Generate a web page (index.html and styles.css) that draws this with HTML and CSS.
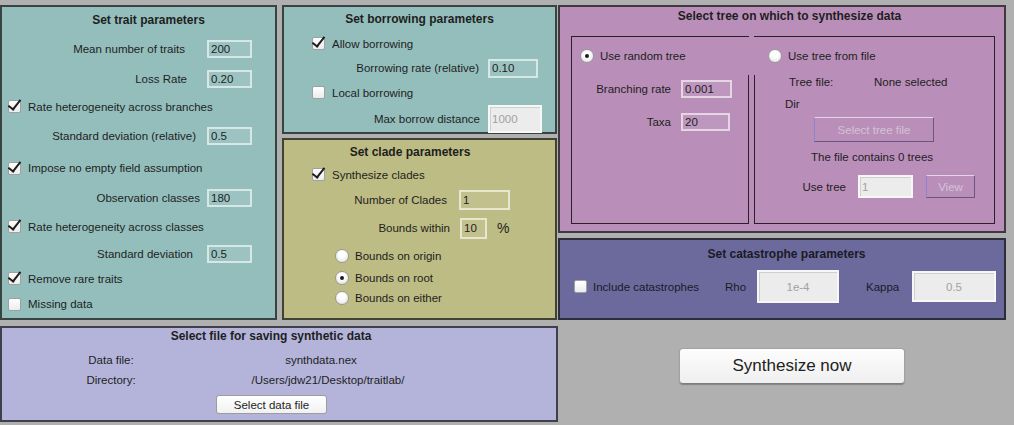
FILE: index.html
```html
<!DOCTYPE html>
<html>
<head>
	<title>TraitLab - Synthesize data</title>
	<link rel="stylesheet" href="styles.css">
</head>
<body>
<div class="app">
	<div class="left-col">
		<div class="top-row">

			<!-- trait parameters -->
			<div class="panel trait">
				<div class="title trait-title">Set trait parameters</div>
				<div class="field"><span class="lbl pr22">Mean number of traits</span><input class="edit w45" type="text" value="200"></div>
				<div class="field"><span class="lbl pr20">Loss Rate</span><input class="edit w45" type="text" value="0.20"></div>
				<div class="check"><span class="box on"></span>Rate heterogeneity across branches</div>
				<div class="field"><span class="lbl pr11">Standard deviation (relative)</span><input class="edit w45" type="text" value="0.5"></div>
				<div class="check"><span class="box on"></span>Impose no empty field assumption</div>
				<div class="field"><span class="lbl pr7">Observation classes</span><input class="edit w45" type="text" value="180"></div>
				<div class="check"><span class="box on"></span>Rate heterogeneity across classes</div>
				<div class="field"><span class="lbl pr14">Standard deviation</span><input class="edit w45" type="text" value="0.5"></div>
				<div class="check"><span class="box on"></span>Remove rare traits</div>
				<div class="check"><span class="box"></span>Missing data</div>
			</div>

			<div class="mid-col">
				<!-- borrowing -->
				<div class="panel borrow">
					<div class="title">Set borrowing parameters</div>
					<div class="check"><span class="box on"></span>Allow borrowing</div>
					<div class="field"><span class="lbl pr9">Borrowing rate (relative)</span><input class="edit w50" type="text" value="0.10"></div>
					<div class="check"><span class="box"></span>Local borrowing</div>
					<div class="field"><span class="lbl pr8">Max borrow distance</span><input class="edit off w54 tall" type="text" value="1000" disabled></div>
				</div>

				<!-- clades -->
				<div class="panel clade">
					<div class="title clade-title">Set clade parameters</div>
					<div class="check"><span class="box on"></span>Synthesize clades</div>
					<div class="field"><span class="lbl pr12 w175">Number of Clades</span><input class="edit w51 h20" type="text" value="1"></div>
					<div class="field"><span class="lbl pr10 w176">Bounds within</span><input class="edit w27 h21" type="text" value="10"><span class="pct">%</span></div>
					<div class="opt"><span class="radio"></span>Bounds on origin</div>
					<div class="opt"><span class="radio on"></span>Bounds on root</div>
					<div class="opt"><span class="radio"></span>Bounds on either</div>
				</div>
			</div>
		</div>

		<!-- output file -->
		<div class="panel save">
			<div class="save-title">Select file for saving synthetic data</div>
			<div class="file-grid">
				<span>Data file:</span><span>synthdata.nex</span>
				<span>Directory:</span><span class="dir-path">/Users/jdw21/Desktop/traitlab/</span>
			</div>
			<button class="btn small-btn">Select data file</button>
		</div>
	</div>

	<div class="right-col">
		<!-- tree -->
		<div class="panel tree">
			<div class="title tree-title">Select tree on which to synthesize data</div>
			<div class="tree-boxes">
				<div class="tbox tbox-left">
					<div class="tbox-head"><span class="radio on"></span>Use random tree</div>
					<div class="tbox-body">
						<div class="field"><span class="lbl">Branching rate</span><input class="edit w51" type="text" value="0.001"></div>
						<div class="field"><span class="lbl">Taxa</span><input class="edit w49" type="text" value="20"></div>
					</div>
				</div>
				<div class="tbox tbox-right">
					<div class="tbox-head"><span class="radio"></span>Use tree from file</div>
					<div class="tbox-body">
						<div class="tf-row"><span class="tf-key">Tree file:</span>None selected</div>
						<div class="dir-row">Dir</div>
						<button class="btn dis-btn tree-btn" disabled>Select tree file</button>
						<div class="count-row">The file contains 0 trees</div>
						<div class="use-row">
							<span class="use-lbl">Use tree</span>
							<input class="edit off w55 h23" type="text" value="1" disabled>
							<button class="btn dis-btn view-btn" disabled>View</button>
						</div>
					</div>
				</div>
			</div>
		</div>

		<!-- catastrophes -->
		<div class="panel cat">
			<div class="cat-title">Set catastrophe parameters</div>
			<div class="cat-row">
				<span class="box"></span>
				<span>Include catastrophes</span>
				<span>Rho</span>
				<input class="edit off center w82 h33" type="text" value="1e-4" disabled>
				<span></span>
				<span>Kappa</span>
				<input class="edit off center w84 h31" type="text" value="0.5" disabled>
			</div>
		</div>

		<div class="go-wrap">
			<button class="btn go-btn">Synthesize now</button>
		</div>
	</div>
</div>
</body>
</html>
```

FILE: styles.css
```css
/* page */
body {
  margin: 0;
  background-color: #b0b0b0;
  font-family: "Liberation Sans", Arial, sans-serif;
  font-size: 11.5px;
  color: #1e1e1e;
  height: 425px;
  overflow: hidden;
}

.app {
  display: flex;
  padding-top: 5px;
}

.left-col {
  width: 558px;
}

.top-row {
  display: flex;
  height: 315px;
}

.mid-col {
  width: 275px;
  margin-left: 5px;
  display: flex;
  flex-direction: column;
}

.right-col {
  width: 448px;
}

/* panels */
.panel {
  box-sizing: border-box;
  border: 2px solid rgba(25, 25, 25, 0.75);
}

.title {
  font-weight: bold;
  font-size: 12px;
  text-align: center;
  white-space: nowrap;
}

.trait {
  width: 277px;
  background-color: #94bebc;
  display: grid;
  grid-template-rows: 26px 31px 30px 25px 33px 32px 28px 29px 25px 25px 26px;
  align-items: center;
}

.trait-title {
  padding-left: 20px;
}

.trait .lbl {
  width: 205px;
}

.trait .check {
  padding-left: 6px;
}

.borrow {
  height: 129px;
  background-color: #94bebc;
  display: grid;
  grid-template-rows: 24px 25px 24px 25px 27px;
  align-items: center;
}

.borrow .lbl {
  width: 204px;
}

.borrow .check,
.clade .check {
  padding-left: 28px;
}

.clade {
  height: 182px;
  margin-top: 4px;
  background-color: #bdbc84;
  display: grid;
  grid-template-rows: 23px 23px 27px 30px 25px 20px 20px;
  align-items: center;
}

.clade-title {
  padding-right: 19px;
}

.pct {
  margin-left: 10px;
  font-size: 14px;
}

.opt {
  display: flex;
  align-items: center;
  padding-left: 51px;
}

.opt .radio {
  margin-right: 6px;
}

/* rows */
.field {
  display: flex;
  align-items: center;
}

.lbl {
  flex: none;
  box-sizing: border-box;
  text-align: right;
  white-space: nowrap;
}

.pr7 { padding-right: 7px; }
.pr8 { padding-right: 8px; }
.pr9 { padding-right: 9px; }
.pr10 { padding-right: 10px; }
.pr11 { padding-right: 11px; }
.pr12 { padding-right: 12px; }
.pr14 { padding-right: 14px; }
.pr20 { padding-right: 20px; }
.pr22 { padding-right: 22px; }
.lbl.w175 { width: 175px; }
.lbl.w176 { width: 176px; }

.check {
  display: flex;
  align-items: center;
  white-space: nowrap;
}

.check .box {
  margin-right: 7px;
}

/* controls */
.edit {
  box-sizing: border-box;
  height: 18px;
  margin: 0;
  padding: 0 2px;
  border: 2px solid rgba(255, 255, 255, 0.6);
  background-color: rgba(255, 255, 255, 0.08);
  font-family: inherit;
  font-size: 11.5px;
  color: #1e1e1e;
  outline: none;
}

.edit.off {
  background-color: #ececec;
  border: 2px solid #f7f7f7;
  box-shadow: inset 1px 1px 0 #cfcfcf;
  color: #a2a2a2;
}

.edit.center {
  text-align: center;
}

.w27 { width: 27px; }
.w45 { width: 45px; }
.w49 { width: 49px; }
.w50 { width: 50px; height: 19px; }
.w51 { width: 51px; }
.w54 { width: 54px; }
.w55 { width: 55px; }
.w82 { width: 82px; }
.w84 { width: 84px; }
.h20 { height: 20px; }
.h21 { height: 21px; }
.h23 { height: 23px; }
.h31 { height: 31px; }
.h33 { height: 33px; }
.tall { height: 28px; }

.box {
  position: relative;
  flex: none;
  box-sizing: border-box;
  width: 13px;
  height: 13px;
  border: 1px solid #a0a0a0;
  border-radius: 2px;
  background: linear-gradient(#ffffff, #ececec);
}

.box.on::after {
  content: "";
  position: absolute;
  left: 2px;
  top: -4px;
  width: 5px;
  height: 11px;
  border-right: 2.5px solid #1c1c1c;
  border-bottom: 2.5px solid #1c1c1c;
  transform: rotate(38deg);
}

.radio {
  position: relative;
  flex: none;
  box-sizing: border-box;
  width: 14px;
  height: 14px;
  border: 1px solid #9a9a9a;
  border-radius: 50%;
  background: radial-gradient(circle at 50% 35%, #ffffff 30%, #dcdcdc 100%);
}

.radio.on::after {
  content: "";
  position: absolute;
  left: 4px;
  top: 4px;
  width: 4px;
  height: 4px;
  border-radius: 50%;
  background-color: #1c1c1c;
}

.btn {
  box-sizing: border-box;
  margin: 0;
  padding: 0;
  font-family: inherit;
  color: #1e1e1e;
  cursor: pointer;
}

/* tree panel */
.tree {
  height: 228px;
  background-color: #b98fb9;
}

.tree-title {
  height: 18px;
  line-height: 18px;
  padding-left: 15px;
}

.tree-boxes {
  display: flex;
  gap: 5px;
  height: 188px;
  margin: 11px 0 0 11px;
}

.tbox {
  box-sizing: border-box;
  display: flex;
  flex-direction: column;
  border: 1px solid #2a1f2c;
}

.tbox-head {
  display: flex;
  align-items: center;
  height: 38px;
  flex: none;
  white-space: nowrap;
}

.tbox-head .radio {
  margin-right: 6px;
}

.tbox-body {
  flex: 1;
}

.tbox-left {
  width: 178px;
  border-right: none;
}

.tbox-left .tbox-head {
  padding-left: 8px;
}

.tbox-left .tbox-body {
  border-right: 1px solid #2a1f2c;
  padding-top: 5px;
  display: flex;
  flex-direction: column;
  gap: 15px;
}

.tbox-left .lbl {
  width: 109px;
  padding-right: 10px;
}

.tbox-right {
  width: 241px;
  border-left: none;
}

.tbox-right .tbox-head {
  padding-left: 14px;
}

.tbox-right .tbox-body {
  border-left: 1px solid #2a1f2c;
}

.tf-row {
  height: 14px;
  line-height: 14px;
  padding-left: 34px;
  white-space: nowrap;
}

.tf-key {
  display: inline-block;
  width: 85px;
}

.dir-row {
  height: 14px;
  line-height: 14px;
  margin-top: 8px;
  padding-left: 30px;
}

.dis-btn {
  background-color: #b98fb9;
  border: 1px solid #6a5680;
  border-top-color: #e4d4ea;
  border-left-color: #8c86d0;
  color: #d3c2d6;
  font-size: 11.5px;
}

.tree-btn {
  display: block;
  width: 120px;
  height: 25px;
  margin: 6px 0 0 59px;
}

.count-row {
  height: 14px;
  line-height: 14px;
  margin-top: 8px;
  padding-left: 56px;
  white-space: nowrap;
}

.use-row {
  display: flex;
  align-items: center;
  height: 23px;
  margin-top: 11px;
}

.use-lbl {
  width: 91px;
  text-align: right;
  margin-right: 12px;
}

.view-btn {
  width: 49px;
  height: 23px;
  margin-left: 13px;
}

/* catastrophe panel */
.cat {
  height: 82px;
  margin-top: 5px;
  background-color: #6c6a9c;
  color: #1a1a26;
}

.cat-title {
  height: 28px;
  line-height: 28px;
  text-align: center;
  font-weight: bold;
  font-size: 12px;
  padding-left: 9px;
}

.cat-row {
  display: grid;
  grid-template-columns: 19px 132px 32px 82px 27px 46px 84px;
  align-items: center;
  height: 37px;
  padding-left: 14px;
  white-space: nowrap;
}

/* save panel */
.save {
  height: 96px;
  margin-top: 6px;
  background-color: #b4b4db;
}

.save-title {
  height: 16px;
  line-height: 16px;
  text-align: center;
  font-weight: bold;
  font-size: 12px;
  padding-right: 16px;
}

.file-grid {
  display: grid;
  grid-template-columns: 80px 340px;
  grid-template-rows: 20px 20px;
  align-items: center;
  margin-top: 6px;
  padding-left: 69px;
  text-align: center;
  white-space: nowrap;
}

.dir-path {
  padding-left: 14px;
}

.small-btn {
  display: block;
  width: 111px;
  height: 19px;
  margin: 5px 0 0 214px;
  background: linear-gradient(#ffffff, #f1f1f1);
  border: 1px solid #9c9c9c;
  border-radius: 3px;
  font-size: 11.5px;
}

/* main action */
.go-wrap {
  padding: 28px 0 0 121px;
}

.go-btn {
  width: 226px;
  height: 36px;
  background: linear-gradient(#fdfdfd, #efefef);
  border: 1px solid #a2a2a2;
  border-bottom-color: #7c7c7c;
  border-radius: 4px;
  box-shadow: 0 1px 1px rgba(0, 0, 0, 0.25);
  font-size: 17px;
  color: #222;
}
```
